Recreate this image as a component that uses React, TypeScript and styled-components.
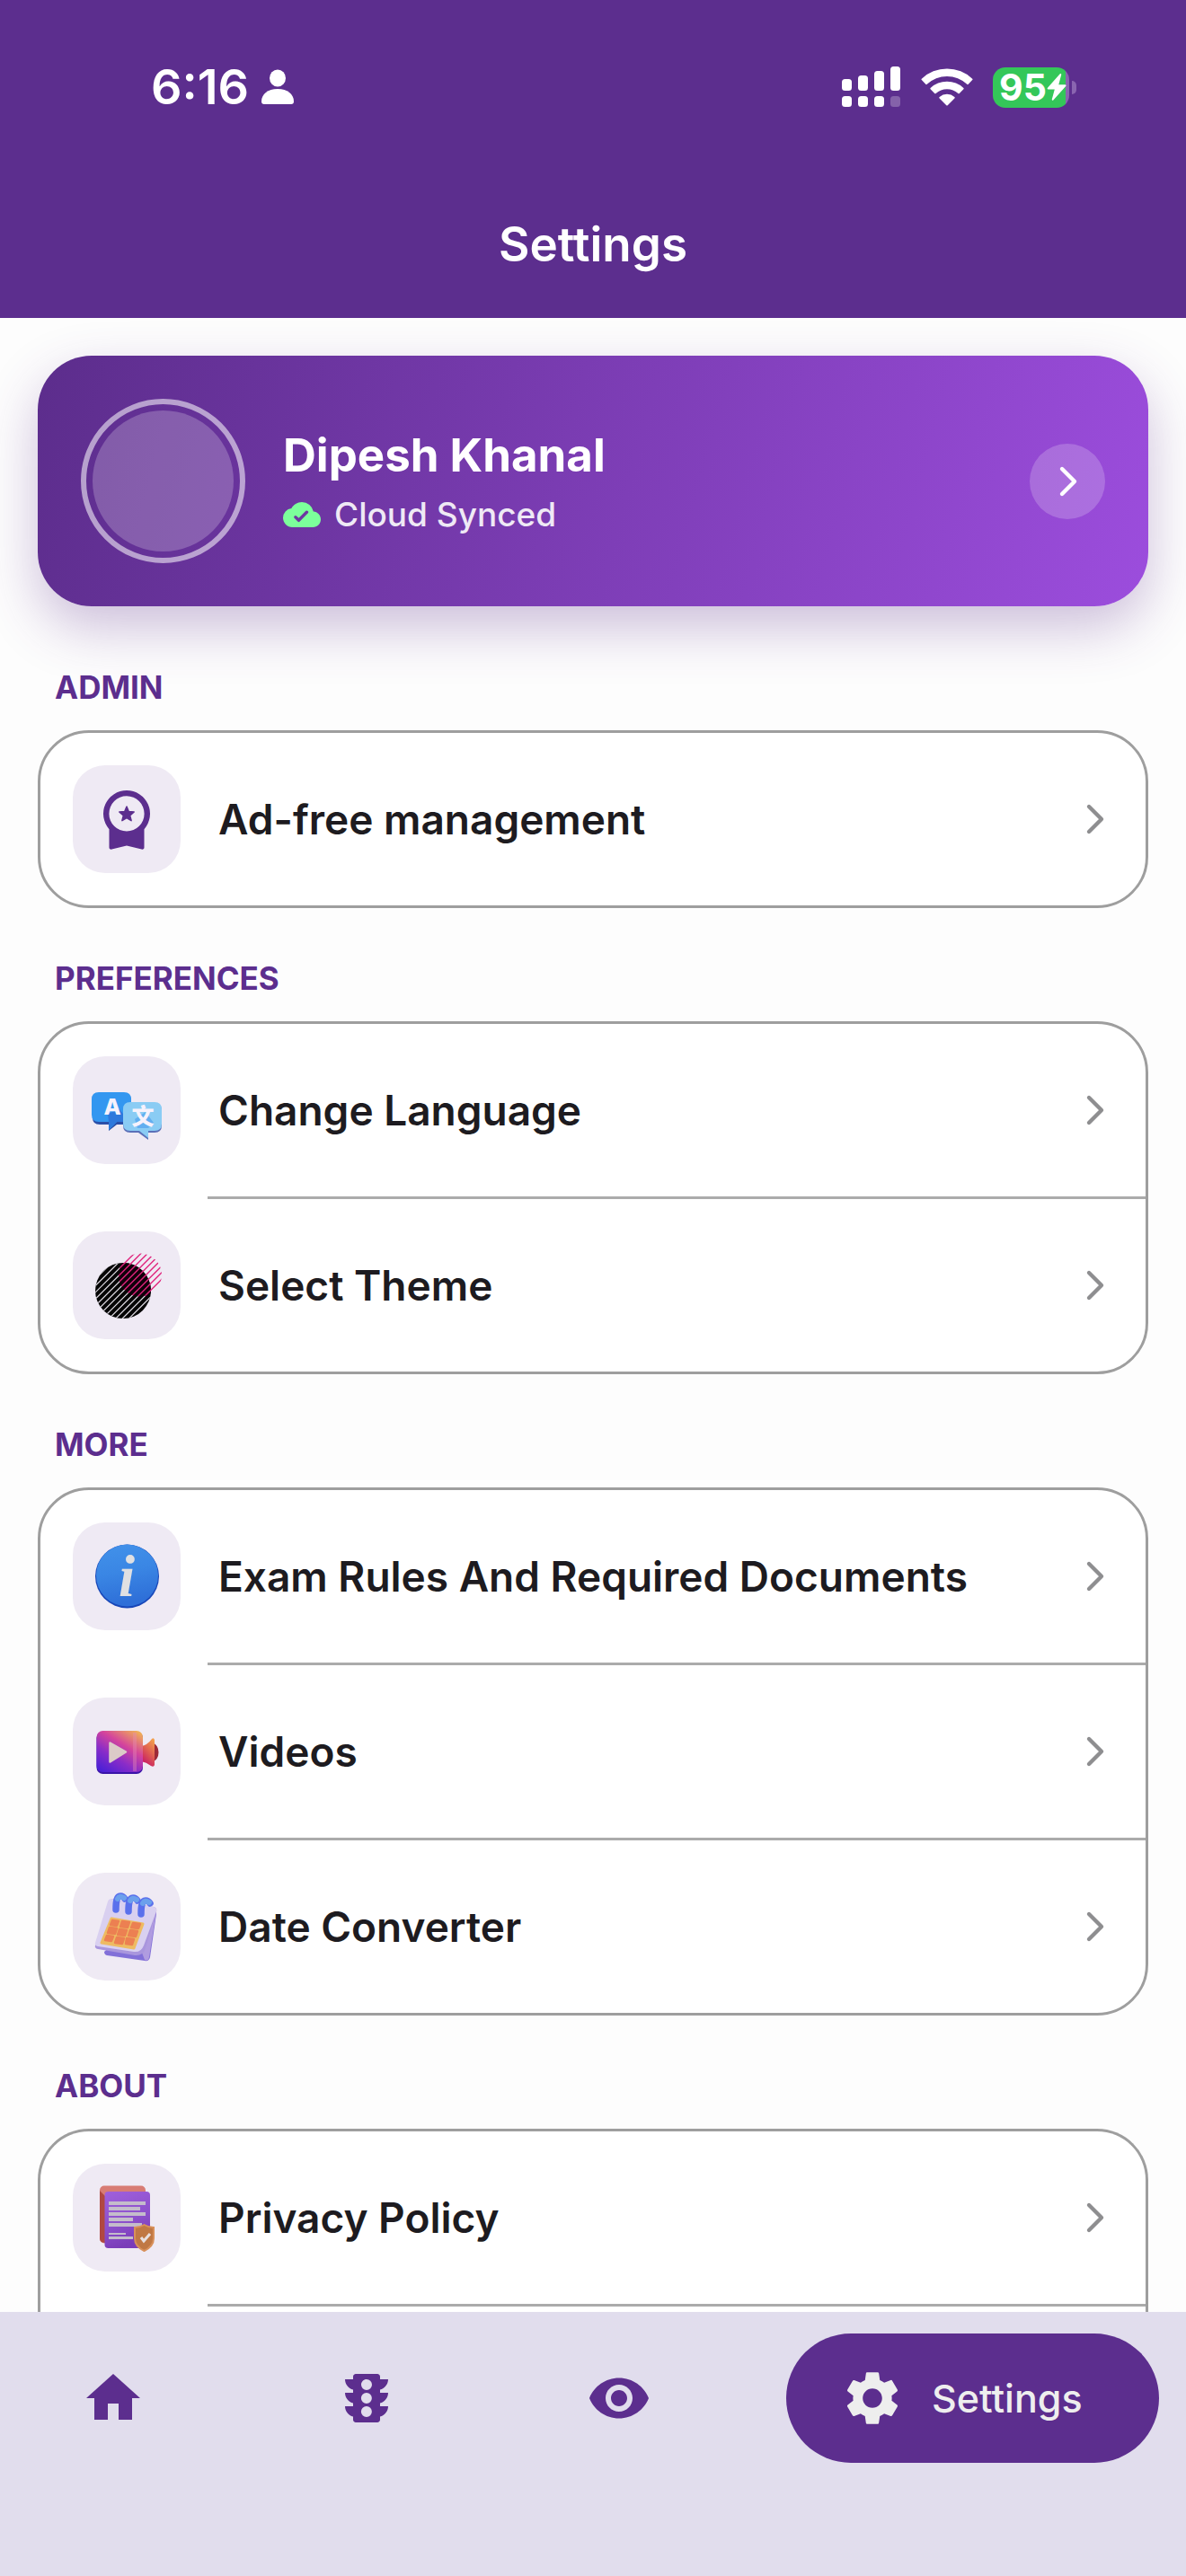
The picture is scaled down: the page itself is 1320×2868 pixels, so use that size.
import React, { useState } from "react";
import { MdHome, MdRemoveRedEye, MdSettings, MdTraffic } from "react-icons/md";
import styled, { createGlobalStyle } from "styled-components";

const purple = "#5c2e8e";

const GlobalStyle = createGlobalStyle`
  * {
    box-sizing: border-box;
  }
  body {
    margin: 0;
    background: #fdfdfd;
    font-family: Inter, "Noto Sans", sans-serif;
  }
  button {
    border: none;
    padding: 0;
    background: none;
    color: inherit;
    font: inherit;
    text-align: left;
    cursor: pointer;
  }
`;

const Screen = styled.div`
  height: 100vh;
  display: flex;
  flex-direction: column;
`;

const Header = styled.header`
  height: 354px;
  flex: none;
  background: ${purple};
  color: #fff;
`;

const StatusBar = styled.div`
  height: 190px;
  padding: 4px 122px 0 168px;
  display: flex;
  align-items: center;
  justify-content: space-between;
`;

const StatusGroup = styled.div<{ $gap: number }>`
  display: flex;
  align-items: center;
  gap: ${(props) => props.$gap}px;
`;

const Clock = styled.time`
  font-size: 54px;
  font-weight: 600;
  line-height: 60px;
`;

const Battery = styled.div`
  display: flex;
  align-items: center;
  gap: 3px;
`;

const BatteryBody = styled.div`
  width: 85px;
  height: 45px;
  padding-left: 7px;
  display: flex;
  align-items: center;
  border-radius: 14px;
  background: linear-gradient(90deg, #34c759 81px, #8a65b0 81px);
  font-size: 41px;
  font-weight: 700;
  line-height: 45px;
`;

const BatteryTip = styled.div`
  width: 5px;
  height: 15px;
  border-radius: 0 8px 8px 0;
  background: #8a65b0;
`;

const Title = styled.h1`
  margin: 0;
  padding-top: 52px;
  text-align: center;
  font-size: 53px;
  font-weight: 600;
  line-height: 60px;
`;

const Main = styled.main`
  flex: 1;
  min-height: 0;
  padding: 42px 42px 0;
  overflow-y: auto;
  scrollbar-width: none;
`;

const Profile = styled.button`
  width: 100%;
  padding: 48px;
  margin-bottom: 12px;
  display: flex;
  align-items: center;
  border-radius: 60px;
  background: linear-gradient(105deg, #5c2d8c, #9c4ddd);
  box-shadow: 0 24px 60px rgba(92, 45, 140, 0.3);
  color: #fff;
`;

const Avatar = styled.span`
  width: 183px;
  height: 183px;
  padding: 7px;
  border: 6px solid rgba(255, 255, 255, 0.55);
  border-radius: 50%;

  &::before {
    content: "";
    display: block;
    height: 100%;
    border-radius: 50%;
    background: rgba(255, 255, 255, 0.22);
  }
`;

const ProfileText = styled.span`
  flex: 1;
  margin-left: 42px;
  padding-top: 3px;
  display: flex;
  flex-direction: column;
  gap: 12px;
`;

const Name = styled.span`
  font-size: 51px;
  font-weight: 700;
  line-height: 60px;
`;

const Sync = styled.span`
  display: flex;
  align-items: center;
  gap: 15px;
  color: #efe9f5;
  font-size: 37px;
  font-weight: 500;
  line-height: 48px;
`;

const RoundArrow = styled.span`
  width: 84px;
  height: 84px;
  display: grid;
  place-items: center;
  border-radius: 50%;
  background: rgba(255, 255, 255, 0.2);
`;

const Section = styled.section`
  padding-top: 51px;
`;

const SectionTitle = styled.h2`
  margin: 0 0 21px 19px;
  color: ${purple};
  font-size: 35px;
  font-weight: 700;
  line-height: 54px;
`;

const Card = styled.div<{ $open?: boolean }>`
  border: 3px solid #9e9e9e;
  border-radius: ${(props) => (props.$open ? "57px 57px 0 0" : "57px")};
  border-bottom-width: ${(props) => (props.$open ? 0 : 3)}px;
  padding-bottom: ${(props) => (props.$open ? 6 : 0)}px;
  background: #fff;
`;

const Row = styled.button`
  width: 100%;
  padding: 36px;
  display: flex;
  align-items: center;
`;

const Tile = styled.span`
  width: 120px;
  height: 120px;
  border-radius: 36px;
  background: #efeaf4;

  svg {
    display: block;
  }
`;

const RowLabel = styled.span`
  flex: 1;
  margin-left: 42px;
  color: #1d1b20;
  font-size: 46px;
  font-weight: 600;
  line-height: 60px;
`;

const Divider = styled.hr`
  height: 3px;
  margin: 0 0 0 186px;
  border: none;
  background: #ababab;
`;

const TabBar = styled.nav`
  height: 294px;
  flex: none;
  padding: 24px 30px;
  display: flex;
  align-items: flex-start;
  justify-content: space-between;
  background: #e1dded;
  color: ${purple};
`;

const Tab = styled.button<{ $active?: boolean }>`
  height: 144px;
  min-width: ${(props) => (props.$active ? 415 : 192)}px;
  padding: 0 60px;
  display: flex;
  align-items: center;
  gap: 30px;
  border-radius: 72px;
  background: ${(props) => (props.$active ? purple : "transparent")};
  color: ${(props) => (props.$active ? "#eeeeee" : "inherit")};
  font-size: 43px;
  font-weight: 500;
`;

const PersonIcon = () => (
  <svg width="36" height="40" viewBox="0 0 36 40" fill="#fff">
    <ellipse cx="18" cy="10" rx="9" ry="9.5" />
    <path d="M3 39a3 3 0 0 1-3-3c0-8 7-14 18-14s18 6 18 14a3 3 0 0 1-3 3z" />
  </svg>
);

const SignalIcon = () => (
  <svg width="66" height="46" viewBox="0 0 66 46" fill="#fff">
    <rect y="14" width="11" height="13" rx="3.5" />
    <rect x="18" y="10" width="11" height="17" rx="3.5" />
    <rect x="36" y="5" width="11" height="22" rx="3.5" />
    <rect x="54" y="0" width="11" height="27" rx="3.5" />
    <rect y="33" width="11" height="12" rx="3.5" />
    <rect x="18" y="33" width="11" height="12" rx="3.5" />
    <rect x="36" y="33" width="11" height="12" rx="3.5" />
    <rect x="54" y="33" width="11" height="12" rx="3.5" opacity="0.25" />
  </svg>
);

const WifiIcon = () => (
  <svg width="58" height="42" viewBox="0 0 58 42" fill="#fff">
    <path d="M.8 13.1a1 1 0 0 1 0-1.4A41 41 0 0 1 57.2 11.7a1 1 0 0 1 0 1.4l-4.5 4.7a1 1 0 0 1-1.4 0A32.5 32.5 0 0 0 6.7 17.8a1 1 0 0 1-1.4 0z" />
    <path d="M10.6 23.3a1 1 0 0 1 0-1.4a27 27 0 0 1 36.8 0a1 1 0 0 1 0 1.4l-4.6 4.6a1 1 0 0 1-1.4 0a18.5 18.5 0 0 0-24.8 0a1 1 0 0 1-1.4 0z" />
    <path d="M20.6 33.4a1 1 0 0 1 0-1.5a13 13 0 0 1 16.8 0a1 1 0 0 1 0 1.5l-7.7 7.8a1 1 0 0 1-1.4 0z" />
  </svg>
);

const BoltIcon = () => (
  <svg width="22" height="30" viewBox="0 0 22 30" fill="#fff">
    <path d="M14.5.4 1 15.8c-.7.9-.3 1.7.7 1.7h7.1L5.8 28.4c-.3 1.3.8 1.9 1.7.9L21.2 14c.7-.9.3-1.7-.7-1.7h-7.2L16.2 1.3c.3-1.3-.9-1.8-1.7-.9z" />
  </svg>
);

const CloudIcon = () => (
  <svg width="42" height="42" viewBox="0 0 24 24" fill="#7cff9b">
    <path
      fillRule="evenodd"
      d="M19.35 10.04A7.49 7.49 0 0 0 12 4C9.11 4 6.6 5.64 5.35 8.04A5.994 5.994 0 0 0 0 14c0 3.31 2.69 6 6 6h13c2.76 0 5-2.24 5-5 0-2.64-2.05-4.78-4.65-4.96zM10.7 16.3a1 1 0 0 1-1.4 0l-2.1-2.1a1 1 0 0 1 1.4-1.4L10 14.2l4.5-4.6a1 1 0 0 1 1.4 1.4z"
    />
  </svg>
);

const Chevron = ({ color }: { color: string }) => (
  <svg width="42" height="42" viewBox="0 0 42 42" fill="none">
    <path
      d="M15 7l14 14-14 14"
      stroke={color}
      strokeWidth="4.4"
      strokeLinecap="round"
      strokeLinejoin="round"
    />
  </svg>
);

const MedalIcon = () => (
  <svg width="120" height="120" viewBox="0 0 120 120" fill={purple}>
    <path
      fillRule="evenodd"
      d="M60 28a26 26 0 0 1 19.5 43.2V91.5a2 2 0 0 1-2.9 2L60 89.5l-16.6 4a2 2 0 0 1-2.9-2V71.2A26 26 0 0 1 60 28zm0 6.3a19.6 19.6 0 1 0 0 39.2 19.6 19.6 0 0 0 0-39.2z"
    />
    <path
      d="M60 46l2.3 5.5 5.9.5-4.5 3.9 1.4 5.8-5.1-3.1-5.1 3.1 1.4-5.8-4.5-3.9 5.9-.5z"
      stroke={purple}
      strokeWidth="1.5"
      strokeLinejoin="round"
    />
  </svg>
);

const LanguageIcon = () => (
  <svg width="120" height="120" viewBox="0 0 120 120">
    <path
      d="M29 42h28q8 0 8 8v18q0 8-8 8h-8l-9 7v-7H30q-8 0-8-8V50q0-8 7-8z"
      fill="#2a4fa8"
    />
    <path
      d="M29 40h28q8 0 8 8v17q0 8-8 8h-8l-9 9v-9H29q-8 0-8-8V48q0-8 8-8z"
      fill="#3397f0"
    />
    <path d="M39 64l13-5 4 5v9h-7l-9 8v-8z" fill="#2e78dc" />
    <path
      d="M64 53h28q7 0 7 8v16q0 8-8 8h-7v8l-11-8h-9q-8 0-8-8V61q0-8 8-8z"
      fill="#5b70b8"
    />
    <path
      d="M64 51h27q8 0 8 8v16q0 8-8 8h-7v8l-10-8H64q-8 0-8-8V59q0-8 8-8z"
      fill="#8accf4"
    />
    <path d="M69 70l12-8 9 12-6 6H72z" fill="#62aef0" />
    <text
      x="44"
      y="65"
      textAnchor="middle"
      fontFamily="Inter, sans-serif"
      fontSize="25"
      fontWeight="800"
      fill="#f6f2fc"
    >
      A
    </text>
    <text
      x="78"
      y="76"
      textAnchor="middle"
      fontFamily='"Noto Sans CJK SC", sans-serif'
      fontSize="25"
      fontWeight="900"
      fill="#f6f2fc"
    >
      文
    </text>
  </svg>
);

// each stripe runs along x + y = n
const stripes = Array.from({ length: 18 }, (_, i) => 56 + i * 7.4);

const ThemeIcon = () => (
  <svg width="120" height="120" viewBox="0 0 120 120" fill="none">
    <clipPath id="dark-disc">
      <circle cx="56" cy="66" r="31" />
    </clipPath>
    <clipPath id="pink-disc">
      <circle cx="75" cy="48.5" r="24" />
    </clipPath>
    <circle cx="56" cy="66" r="31" fill="#050505" />
    <g clipPath="url(#dark-disc)">
      {stripes.map((n) => (
        <path
          key={n}
          d={`M0 ${n}L${n} 0`}
          stroke="#e4e0e8"
          strokeWidth="1.2"
        />
      ))}
      <circle cx="75" cy="48.5" r="24" fill="#10000a" />
    </g>
    <g clipPath="url(#pink-disc)">
      {stripes.map((n) => (
        <path
          key={n}
          d={`M0 ${n}L${n} 0`}
          stroke="#e0247c"
          strokeWidth="1.4"
        />
      ))}
    </g>
  </svg>
);

const InfoIcon = () => (
  <svg width="120" height="120" viewBox="0 0 120 120">
    <defs>
      <linearGradient id="info-fill" x1="0" y1="0" x2="0.2" y2="1">
        <stop offset="0" stopColor="#4292ea" />
        <stop offset="0.5" stopColor="#3a86e4" />
        <stop offset="1" stopColor="#2e6fd8" />
      </linearGradient>
    </defs>
    <circle cx="60.5" cy="60" r="35.5" fill="#1746b8" />
    <circle cx="60.5" cy="59" r="34.5" fill="url(#info-fill)" />
    <text
      x="60"
      y="82"
      textAnchor="middle"
      fontFamily='"Liberation Serif", serif'
      fontSize="65"
      fontStyle="italic"
      fontWeight="700"
      fill="#e0e0e2"
    >
      i
    </text>
  </svg>
);

const VideoIcon = () => (
  <svg width="120" height="120" viewBox="0 0 120 120">
    <defs>
      <linearGradient id="video-body" x1="0.15" y1="1" x2="0.85" y2="0">
        <stop offset="0" stopColor="#4a20d6" />
        <stop offset="0.35" stopColor="#8a2cc8" />
        <stop offset="0.65" stopColor="#d4449c" />
        <stop offset="1" stopColor="#f0ac58" />
      </linearGradient>
      <linearGradient id="video-lens" x1="0.8" y1="0" x2="0.3" y2="1">
        <stop offset="0" stopColor="#f3a04c" />
        <stop offset="0.5" stopColor="#de5a52" />
        <stop offset="1" stopColor="#c41468" />
      </linearGradient>
    </defs>
    <ellipse cx="89" cy="61" rx="6.5" ry="10" fill="#9c2a38" />
    <path
      d="M76 54q7-1 12-8 2-2 3 1v28q-1 3-4 1-5-4-11-5z"
      fill="url(#video-lens)"
    />
    <rect x="26.5" y="38" width="51.5" height="47" rx="7" fill="#3a14a8" />
    <rect x="26.5" y="37" width="51.5" height="46" rx="7" fill="url(#video-body)" />
    <rect x="67" y="39" width="4" height="43" fill="#e58cb4" opacity="0.4" />
    <path
      d="M41.5 50.5l17.5 10-17.5 11z"
      fill="#dccbc8"
      stroke="#dccbc8"
      strokeWidth="2.5"
      strokeLinejoin="round"
    />
  </svg>
);

const CalendarIcon = () => (
  <svg width="120" height="120" viewBox="0 0 120 120">
    <path d="M88 42q5-1 5 4l-7 48q-1 5-6 4l-42-6q-3-1-3-4z" fill="#8270d8" />
    <path d="M86 44l7-1-8 51q-1 5-5 3l-3-8z" fill="#b09ce0" />
    <path
      d="M43 29l47 9q4 1 3 5L81 84q-3 9-12 8l-41-7q-4-1-3-4z"
      fill="#a996dd"
    />
    <path
      d="M43 29l47 9q4 1 3 5L79 81q-3 8-11 7l-40-6q-4-1-3-4l14-46q1-3 4-3z"
      fill="#d9d0f0"
    />
    <path
      d="M43 51l35 6-10 27-36-6z"
      fill="#eebb62"
      stroke="#eebb62"
      strokeWidth="3"
      strokeLinejoin="round"
    />
    <g fill="#ec8052" stroke="#ec8052" strokeWidth="2.4" strokeLinejoin="round">
      <path d="M44 53l7 1-2 5-7-1zM55 54l8 1-2 6-8-1zM67 56l8 1-2 5-8-1z" />
      <path d="M41 61l8 1-2 6-8-1zM52 63l8 1-2 6-8-1zM64 64l8 1-2 6-8-1z" />
      <path d="M38 70l7 1-2 5-7-1zM49 72l8 1-2 6-8-1zM60 73l8 1-2 6-7-1z" />
    </g>
    <g fill="none" strokeWidth="7.5" strokeLinecap="round">
      <path d="M48 41c0-9 1-15 5-15q3 0 5 3" stroke="#5a70ec" />
      <path d="M62 43c0-9 1-15 5-15q3 0 5 3" stroke="#5a70ec" />
      <path d="M76 46c0-9 1-15 5-15q3 0 5 3" stroke="#5a70ec" />
      <path
        d="M50 29q2-4 7-1M64 31q2-4 7-1M78 34q2-4 7-1"
        stroke="#6ca0ec"
        strokeWidth="6"
      />
    </g>
  </svg>
);

const PrivacyIcon = () => (
  <svg width="120" height="120" viewBox="0 0 120 120">
    <defs>
      <linearGradient id="page-fill" x1="0" y1="0" x2="0.3" y2="1">
        <stop offset="0" stopColor="#a060dc" />
        <stop offset="0.6" stopColor="#8c50cc" />
        <stop offset="1" stopColor="#7a3cb8" />
      </linearGradient>
    </defs>
    <rect x="30" y="24.5" width="51" height="64" rx="5" fill="#d87c74" />
    <path d="M30 30l6 6v52q-6 0-6-5z" fill="#b04840" />
    <rect x="35.5" y="31" width="50.5" height="63" rx="4" fill="url(#page-fill)" />
    <g fill="#c4bccb">
      <rect x="40" y="42" width="41" height="4" />
      <rect x="40" y="48" width="35" height="4" />
      <rect x="40" y="54" width="41" height="4" />
      <rect x="40" y="60" width="27" height="4" />
      <rect x="40" y="66" width="37" height="4" />
      <rect x="40" y="77" width="19" height="2" />
      <rect x="40" y="81" width="27" height="3" />
    </g>
    <path
      d="M79.5 68q5 3 10.5 3v12q0 9-10.5 14Q69 92 69 83V71q5.5 0 10.5-3z"
      fill="#c07844"
      stroke="#d8905a"
      strokeWidth="2"
    />
    <path d="M76 82l3 4 7-8" fill="none" stroke="#e8e0e0" strokeWidth="3" />
  </svg>
);

interface SettingItem {
  label: string;
  icon: React.ReactNode;
}

interface SettingSection {
  title: string;
  items: SettingItem[];
  open?: boolean;
}

const sections: SettingSection[] = [
  {
    title: "ADMIN",
    items: [{ label: "Ad-free management", icon: <MedalIcon /> }],
  },
  {
    title: "PREFERENCES",
    items: [
      { label: "Change Language", icon: <LanguageIcon /> },
      { label: "Select Theme", icon: <ThemeIcon /> },
    ],
  },
  {
    title: "MORE",
    items: [
      { label: "Exam Rules And Required Documents", icon: <InfoIcon /> },
      { label: "Videos", icon: <VideoIcon /> },
      { label: "Date Converter", icon: <CalendarIcon /> },
    ],
  },
  {
    title: "ABOUT",
    items: [{ label: "Privacy Policy", icon: <PrivacyIcon /> }],
    open: true,
  },
];

const tabs = [
  { label: "Home", Icon: MdHome },
  { label: "Traffic", Icon: MdTraffic },
  { label: "Vision", Icon: MdRemoveRedEye },
  { label: "Settings", Icon: MdSettings },
];

function App() {
  const [activeTab, setActiveTab] = useState<string>("Settings");

  return (
    <Screen>
      <GlobalStyle />
      <Header>
        <StatusBar>
          <StatusGroup $gap={14}>
            <Clock>6:16</Clock>
            <PersonIcon />
          </StatusGroup>
          <StatusGroup $gap={22}>
            <SignalIcon />
            <WifiIcon />
            <Battery>
              <BatteryBody>
                95
                <BoltIcon />
              </BatteryBody>
              <BatteryTip />
            </Battery>
          </StatusGroup>
        </StatusBar>
        <Title>Settings</Title>
      </Header>

      <Main>
        <Profile type="button">
          <Avatar />
          <ProfileText>
            <Name>Dipesh Khanal</Name>
            <Sync>
              <CloudIcon />
              Cloud Synced
            </Sync>
          </ProfileText>
          <RoundArrow>
            <Chevron color="#fff" />
          </RoundArrow>
        </Profile>

        {sections.map((section) => (
          <Section key={section.title}>
            <SectionTitle>{section.title}</SectionTitle>
            <Card $open={section.open}>
              {section.items.map((item, index) => (
                <React.Fragment key={item.label}>
                  {index > 0 && <Divider />}
                  <Row type="button">
                    <Tile>{item.icon}</Tile>
                    <RowLabel>{item.label}</RowLabel>
                    <Chevron color="#8e8e90" />
                  </Row>
                </React.Fragment>
              ))}
              {section.open && <Divider />}
            </Card>
          </Section>
        ))}
      </Main>

      <TabBar>
        {tabs.map(({ label, Icon }) => (
          <Tab
            key={label}
            type="button"
            aria-label={label}
            $active={label === activeTab}
            onClick={() => setActiveTab(label)}
          >
            <Icon size={72} />
            {label === activeTab && <span>{label}</span>}
          </Tab>
        ))}
      </TabBar>
    </Screen>
  );
}

export default App;
